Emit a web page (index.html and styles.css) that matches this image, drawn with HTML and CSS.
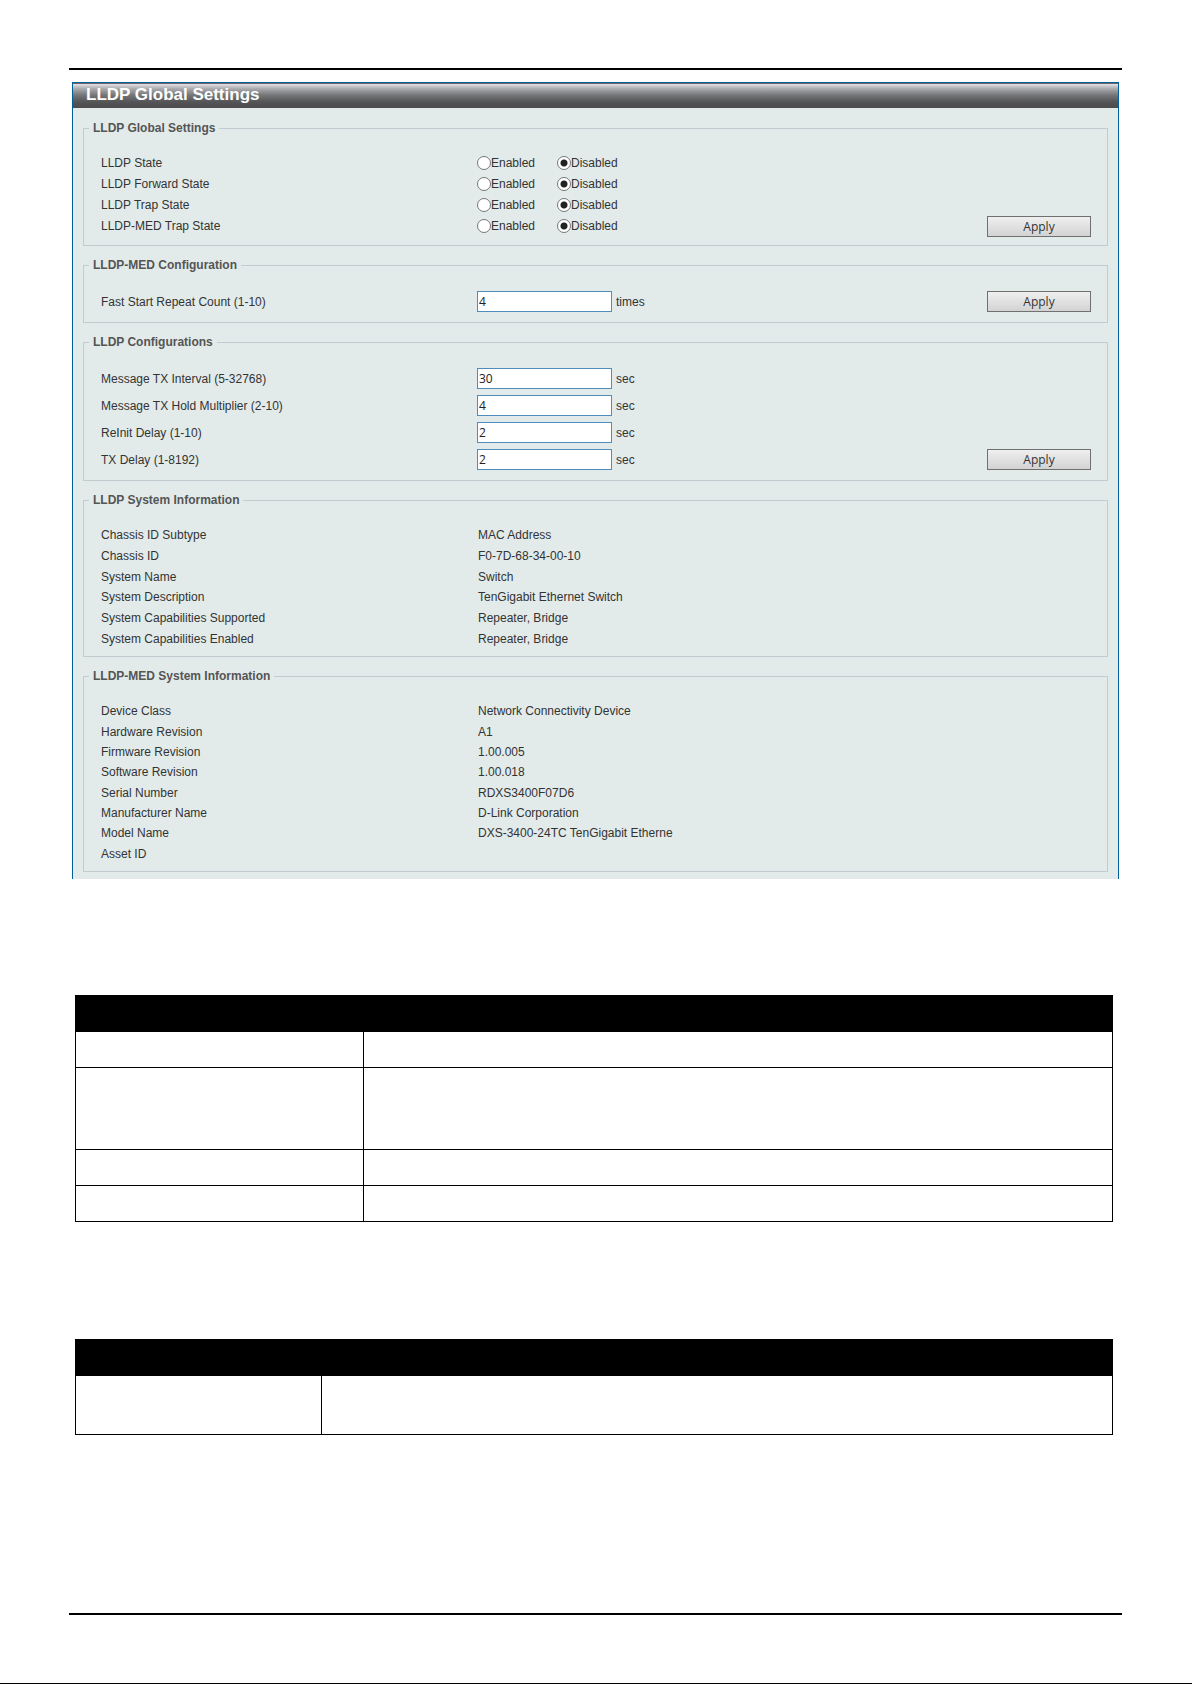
FILE: index.html
```html
<!DOCTYPE html>
<html lang="en">
  <head>
    <meta charset="utf-8">
    <title>LLDP Global Settings</title>
    <link rel="stylesheet" href="styles.css">
  </head>
  <body>
  <div class="page">
    <hr class="rule">

    <div class="panel">
      <h1 class="bar">LLDP Global Settings</h1>

      <form>
      <fieldset class="box">
        <legend>LLDP Global Settings</legend>
        <div class="content">
          <div class="rows">
            <div class="row radios" role="radiogroup" aria-labelledby="state">
              <span class="name" id="state">LLDP State</span>
              <label><input type="radio" name="state">Enabled</label>
              <label><input type="radio" name="state" checked>Disabled</label>
            </div>
            <div class="row radios" role="radiogroup" aria-labelledby="forward">
              <span class="name" id="forward">LLDP Forward State</span>
              <label><input type="radio" name="forward">Enabled</label>
              <label><input type="radio" name="forward" checked>Disabled</label>
            </div>
            <div class="row radios" role="radiogroup" aria-labelledby="trap">
              <span class="name" id="trap">LLDP Trap State</span>
              <label><input type="radio" name="trap">Enabled</label>
              <label><input type="radio" name="trap" checked>Disabled</label>
            </div>
            <div class="row radios" role="radiogroup" aria-labelledby="medtrap">
              <span class="name" id="medtrap">LLDP-MED Trap State</span>
              <label><input type="radio" name="medtrap">Enabled</label>
              <label><input type="radio" name="medtrap" checked>Disabled</label>
            </div>
          </div>
          <button type="button" class="apply">Apply</button>
        </div>
      </fieldset>
      </form>

      <form>
      <fieldset class="box">
        <legend>LLDP-MED Configuration</legend>
        <div class="content fields">
          <div class="rows">
            <div class="row">
              <label class="name" for="fast">Fast Start Repeat Count (1-10)</label>
              <input type="text" id="fast" class="text" value="4"><span>times</span>
            </div>
          </div>
          <button type="button" class="apply">Apply</button>
        </div>
      </fieldset>
      </form>

      <form>
      <fieldset class="box">
        <legend>LLDP Configurations</legend>
        <div class="content fields">
          <div class="rows">
            <div class="row">
              <label class="name" for="interval">Message TX Interval (5-32768)</label>
              <input type="text" id="interval" class="text" value="30"><span>sec</span>
            </div>
            <div class="row">
              <label class="name" for="hold">Message TX Hold Multiplier (2-10)</label>
              <input type="text" id="hold" class="text" value="4"><span>sec</span>
            </div>
            <div class="row">
              <label class="name" for="reinit">ReInit Delay (1-10)</label>
              <input type="text" id="reinit" class="text" value="2"><span>sec</span>
            </div>
            <div class="row">
              <label class="name" for="delay">TX Delay (1-8192)</label>
              <input type="text" id="delay" class="text" value="2"><span>sec</span>
            </div>
          </div>
          <button type="button" class="apply">Apply</button>
        </div>
      </fieldset>
      </form>

      <fieldset class="box">
        <legend>LLDP System Information</legend>
        <table class="info system">
          <tr><th scope="row">Chassis ID Subtype</th><td>MAC Address</td></tr>
          <tr><th scope="row">Chassis ID</th><td>F0-7D-68-34-00-10</td></tr>
          <tr><th scope="row">System Name</th><td>Switch</td></tr>
          <tr><th scope="row">System Description</th><td>TenGigabit Ethernet Switch</td></tr>
          <tr><th scope="row">System Capabilities Supported</th><td>Repeater, Bridge</td></tr>
          <tr><th scope="row">System Capabilities Enabled</th><td>Repeater, Bridge</td></tr>
        </table>
      </fieldset>

      <fieldset class="box">
        <legend>LLDP-MED System Information</legend>
        <table class="info med">
          <tr><th scope="row">Device Class</th><td>Network Connectivity Device</td></tr>
          <tr><th scope="row">Hardware Revision</th><td>A1</td></tr>
          <tr><th scope="row">Firmware Revision</th><td>1.00.005</td></tr>
          <tr><th scope="row">Software Revision</th><td>1.00.018</td></tr>
          <tr><th scope="row">Serial Number</th><td>RDXS3400F07D6</td></tr>
          <tr><th scope="row">Manufacturer Name</th><td>D-Link Corporation</td></tr>
          <tr><th scope="row">Model Name</th><td>DXS-3400-24TC TenGigabit Etherne</td></tr>
          <tr><th scope="row">Asset ID</th><td></td></tr>
        </table>
      </fieldset>
    </div>

    <table class="grid">
      <colgroup><col class="wide"><col></colgroup>
      <thead><tr><th></th><th></th></tr></thead>
      <tbody>
        <tr><td></td><td></td></tr>
        <tr class="three"><td></td><td></td></tr>
        <tr><td></td><td></td></tr>
        <tr><td></td><td></td></tr>
      </tbody>
    </table>

    <table class="grid">
      <colgroup><col class="narrow"><col></colgroup>
      <thead><tr><th></th><th></th></tr></thead>
      <tbody>
        <tr class="two"><td></td><td></td></tr>
      </tbody>
    </table>

    <hr class="rule last">
  </div>
  </body>
</html>
```

FILE: styles.css
```css
* { box-sizing: border-box; }
body { margin: 0; background: #fff; font-family: "Liberation Sans", Arial, sans-serif; font-size: 12px; line-height: 16px; color: #333; }
form { margin: 0; }

.page { display: flow-root; min-height: 100vh; padding: 0 70px 0 69px; border-bottom: 1px solid #000; }
.rule { height: 2px; margin: 68px 0 12px; border: 0; background: #000; }
.last { margin: 178px 0 67px; }

/* settings panel */
.panel { margin: 0 3px 116px; padding-bottom: 7px; border: 1px solid #00609a; border-bottom: 0; background: #e2ebea; }
.bar { height: 25px; margin: 0 0 12px; padding-left: 13px; border-top: 1px solid #6b6569; background: linear-gradient(#e4e4e8, #aaaaae 20%, #77787b 45%, #545456 75%, #4b4b4d); color: #fff; font-size: 17px; line-height: 21px; }

.box { min-width: 0; margin: 0 10px 11px; padding: 0; border: 1px solid #c0cccf; }
.panel > .box:last-child { margin-bottom: 0; }
.box legend { margin-left: 5px; padding: 0 4px; color: #555; font-weight: bold; }

.content { display: flex; justify-content: space-between; align-items: flex-end; padding: 16px 16px 8px 17px; }
.rows { padding-bottom: 1px; }
.row { display: flex; align-items: center; height: 21px; }
.name { width: 376px; }
.fields { padding-top: 18px; padding-bottom: 10px; }
.fields .rows { display: grid; gap: 6px; padding-bottom: 0; }

.radios label { display: flex; align-items: center; width: 80px; }
.radios input { appearance: none; width: 14px; height: 14px; margin: 0; border: 1px solid #777; border-radius: 50%; background: #fff; }
.radios input:checked { background: radial-gradient(circle, #222 3px, #fff 4px); }

.text { width: 135px; height: 21px; margin: 0 4px 0 0; padding: 0 1px; border: 1px solid #4f8dbd; background: #fff; color: #222; font: 12px "Open Sans", sans-serif; }
.apply { width: 104px; height: 21px; padding: 0; border: 1px solid #707070; background: linear-gradient(#efefef, #d3d3d3); color: #333; font: 12px "Open Sans", sans-serif; }

/* read only values */
.info { width: 100%; margin: 17px 0 7px; border-collapse: collapse; table-layout: fixed; }
.info th { width: 394px; padding: 0 0 0 17px; text-align: left; font-weight: normal; }
.info td { padding: 0; }
.system { height: 124px; }
.med { height: 163px; }

/* description tables */
.grid { width: calc(100% - 15px); margin: 0 9px 117px 6px; border-collapse: collapse; table-layout: fixed; }
.grid th, .grid td { height: 36px; padding: 0; border: 1px solid #000; }
.grid th { background: #000; }
.grid .three td { height: 82px; }
.grid .two td { height: 59px; }
.wide { width: 288px; }
.narrow { width: 246px; }
```
